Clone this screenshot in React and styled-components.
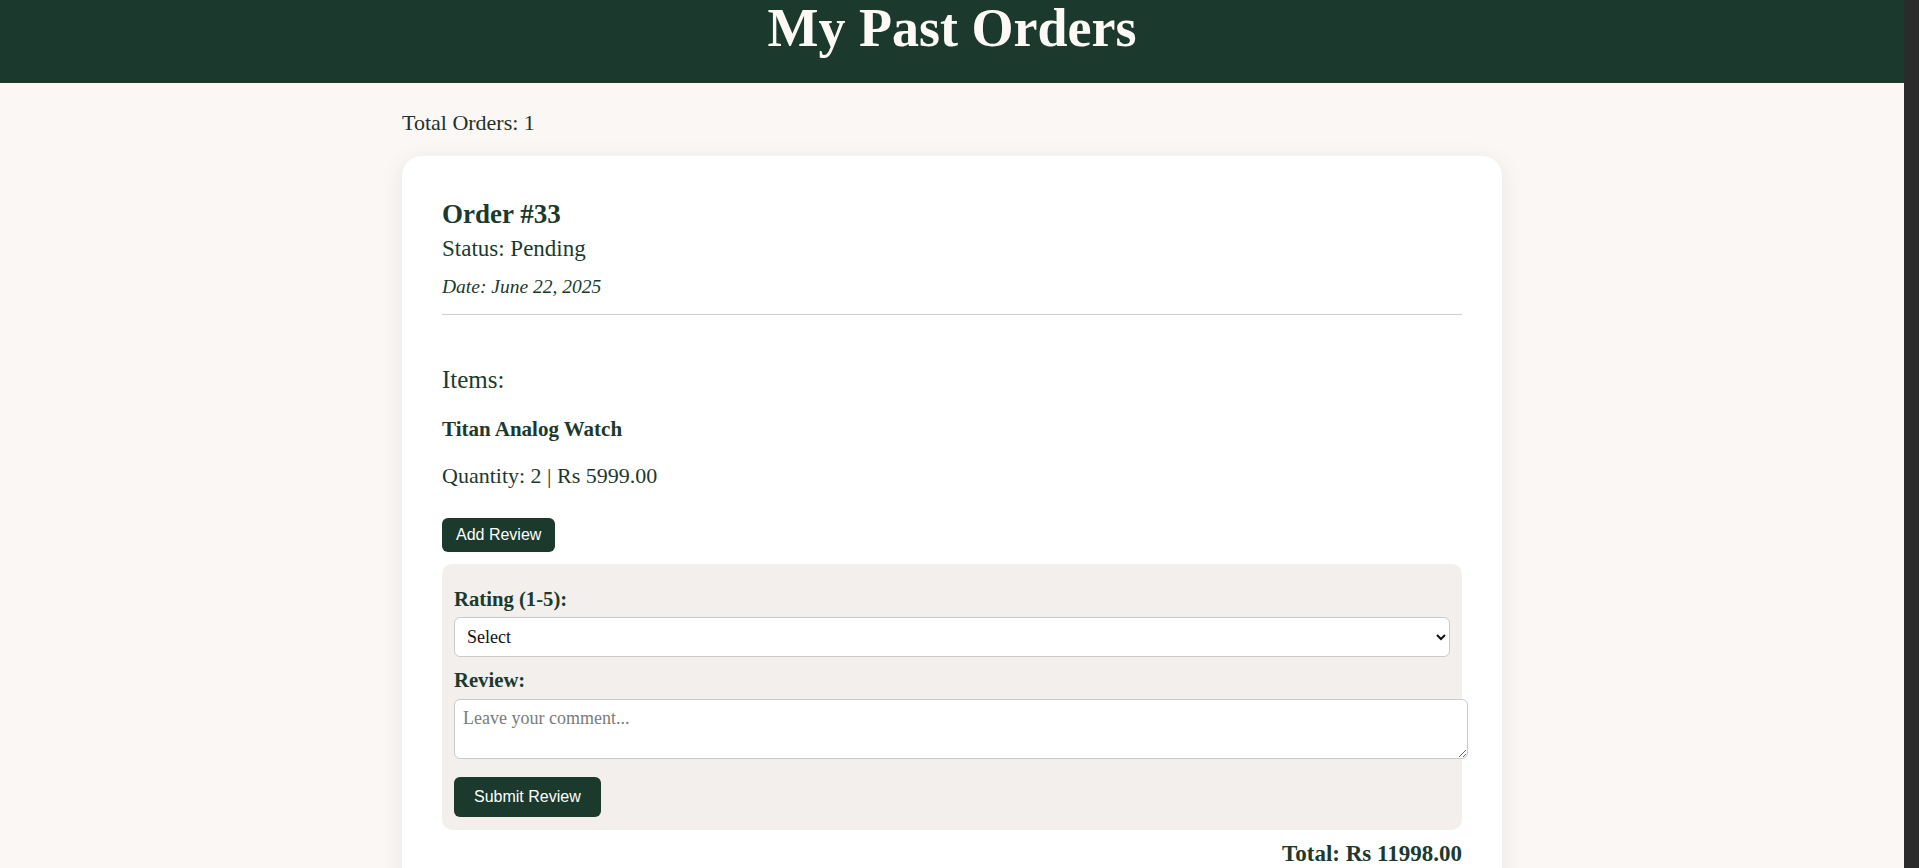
import React from "react";
import styled, { createGlobalStyle } from "styled-components";

const ink = "#1b3a2d";

// the reference was taken with a 15px classic scrollbar on the right,
// so the page is laid out in the remaining 1904px
const GlobalStyle = createGlobalStyle`
    * {
        box-sizing: border-box;
    }
    html {
        background: #2b2b2b;
    }
    body {
        margin: 0 15px 0 0;
        min-height: 100vh;
        background: #faf7f5;
        color: ${ink};
        font-family: "Liberation Serif", "Times New Roman", serif;
    }
`;

const Header = styled.header`
    height: 83px;
    background: ${ink};
    text-align: center;
`;

const Title = styled.h1`
    margin: 0;
    font-size: 54px;
    line-height: 56px;
    font-weight: 700;
    color: #fdfaf6;
`;

const Main = styled.main`
    width: 1100px;
    margin: 0 auto;
    padding-top: 27px;
`;

const TotalOrders = styled.p`
    margin: 0 0 20px;
    font-size: 22px;
    line-height: 26px;
    color: #22322b;
`;

const OrderCard = styled.section`
    background: #fff;
    border-radius: 20px;
    padding: 40px 40px 40px;
    box-shadow: 0 4px 22px rgba(60, 40, 30, 0.08);
`;

const OrderHead = styled.div`
    padding-bottom: 15px;
    border-bottom: 1px solid #cfcfcf;
`;

const OrderTitle = styled.h3`
    margin: 0;
    font-size: 27px;
    line-height: 36px;
    font-weight: 700;
`;

const Status = styled.p`
    margin: 3px 0 0;
    font-size: 23px;
    line-height: 28px;
`;

const OrderDate = styled.p`
    margin: 12px 0 0;
    font-size: 19.5px;
    line-height: 24px;
    font-style: italic;
`;

const ItemsHeading = styled.h4`
    margin: 50px 0 0;
    font-size: 25px;
    line-height: 30px;
    font-weight: 400;
`;

const ItemName = styled.p`
    margin: 21px 0 0;
    font-size: 21px;
    line-height: 26px;
    font-weight: 700;
`;

const ItemMeta = styled.p`
    margin: 20px 0 0;
    font-size: 22px;
    line-height: 28px;
`;

const Button = styled.button`
    display: block;
    border: none;
    border-radius: 6px;
    background: ${ink};
    color: #fff;
    font-family: "Liberation Sans", Arial, sans-serif;
    font-size: 16px;
    line-height: normal;
    padding: ${(p) => (p.$large ? "11px 20px" : "8px 14px")};
    margin-top: ${(p) => p.$top || 0}px;
    cursor: pointer;
`;

const ReviewForm = styled.form`
    margin-top: 12px;
    background: #f3efec;
    border-radius: 10px;
    padding: 23px 12px 13px;
`;

const FieldLabel = styled.label`
    display: block;
    margin-top: ${(p) => p.$top || 0}px;
    font-size: 20.7px;
    line-height: 24px;
    font-weight: 700;
`;

const RatingSelect = styled.select`
    display: block;
    width: 100%;
    height: 40px;
    margin-top: 6px;
    padding: 0 8px;
    border: 1px solid #cacaca;
    border-radius: 6px;
    background: #fff;
    color: #111;
    font-family: "Liberation Serif", serif;
    font-size: 18px;
`;

const ReviewTextarea = styled.textarea`
    display: block;
    box-sizing: content-box;
    width: 100%;
    height: 42px;
    margin-top: 7px;
    padding: 8px;
    border: 1px solid #cacaca;
    border-radius: 6px;
    background: #fff;
    font-family: "Liberation Serif", serif;
    font-size: 18px;
    color: ${ink};
    &::placeholder {
        color: #7b7b7b;
    }
`;

const OrderTotal = styled.p`
    margin: 10px 0 0;
    text-align: right;
    font-size: 23px;
    line-height: 28px;
    font-weight: 700;
`;

const App = () => {
    return (
        <>
            <GlobalStyle />
            <Header>
                <Title>My Past Orders</Title>
            </Header>
            <Main>
                <TotalOrders>Total Orders: 1</TotalOrders>
                <OrderCard>
                    <OrderHead>
                        <OrderTitle>Order #33</OrderTitle>
                        <Status>Status: Pending</Status>
                        <OrderDate>Date: June 22, 2025</OrderDate>
                    </OrderHead>
                    <ItemsHeading>Items:</ItemsHeading>
                    <ItemName>Titan Analog Watch</ItemName>
                    <ItemMeta>Quantity: 2 | Rs 5999.00</ItemMeta>
                    <Button type="button" $top={28}>Add Review</Button>
                    <ReviewForm onSubmit={(e) => e.preventDefault()}>
                        <FieldLabel>Rating (1-5):</FieldLabel>
                        <RatingSelect defaultValue="">
                            <option value="">Select</option>
                            <option value="1">1</option>
                            <option value="2">2</option>
                            <option value="3">3</option>
                            <option value="4">4</option>
                            <option value="5">5</option>
                        </RatingSelect>
                        <FieldLabel $top={11}>Review:</FieldLabel>
                        <ReviewTextarea placeholder="Leave your comment..." />
                        <Button type="submit" $large $top={18}>Submit Review</Button>
                    </ReviewForm>
                    <OrderTotal>Total: Rs 11998.00</OrderTotal>
                </OrderCard>
            </Main>
        </>
    );
};

export default App;
